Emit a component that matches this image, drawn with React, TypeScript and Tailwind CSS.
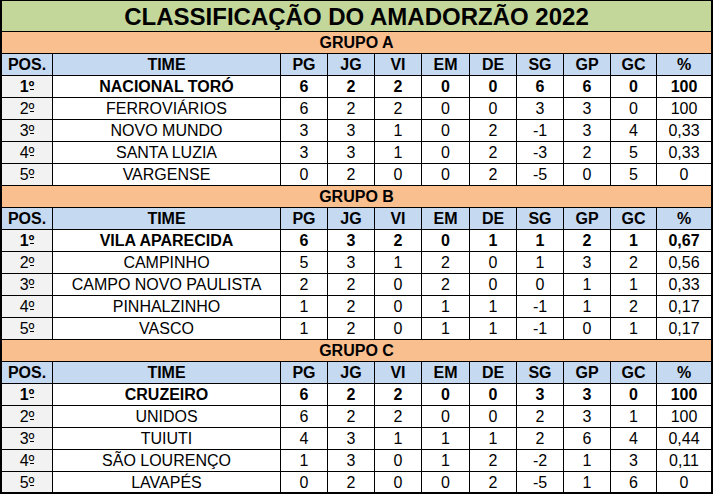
import React from "react";

type Row = { pos: string; time: string; v: string[] };
type Group = { name: string; rows: Row[] };

const groups: Group[] = [
  {
    name: "GRUPO A",
    rows: [
      { pos: "1", time: "NACIONAL TORÓ", v: ["6", "2", "2", "0", "0", "6", "6", "0", "100"] },
      { pos: "2", time: "FERROVIÁRIOS", v: ["6", "2", "2", "0", "0", "3", "3", "0", "100"] },
      { pos: "3", time: "NOVO MUNDO", v: ["3", "3", "1", "0", "2", "-1", "3", "4", "0,33"] },
      { pos: "4", time: "SANTA LUZIA", v: ["3", "3", "1", "0", "2", "-3", "2", "5", "0,33"] },
      { pos: "5", time: "VARGENSE", v: ["0", "2", "0", "0", "2", "-5", "0", "5", "0"] },
    ],
  },
  {
    name: "GRUPO B",
    rows: [
      { pos: "1", time: "VILA APARECIDA", v: ["6", "3", "2", "0", "1", "1", "2", "1", "0,67"] },
      { pos: "2", time: "CAMPINHO", v: ["5", "3", "1", "2", "0", "1", "3", "2", "0,56"] },
      { pos: "3", time: "CAMPO NOVO PAULISTA", v: ["2", "2", "0", "2", "0", "0", "1", "1", "0,33"] },
      { pos: "4", time: "PINHALZINHO", v: ["1", "2", "0", "1", "1", "-1", "1", "2", "0,17"] },
      { pos: "5", time: "VASCO", v: ["1", "2", "0", "1", "1", "-1", "0", "1", "0,17"] },
    ],
  },
  {
    name: "GRUPO C",
    rows: [
      { pos: "1", time: "CRUZEIRO", v: ["6", "2", "2", "0", "0", "3", "3", "0", "100"] },
      { pos: "2", time: "UNIDOS", v: ["6", "2", "2", "0", "0", "2", "3", "1", "100"] },
      { pos: "3", time: "TUIUTI", v: ["4", "3", "1", "1", "1", "2", "6", "4", "0,44"] },
      { pos: "4", time: "SÃO LOURENÇO", v: ["1", "3", "0", "1", "2", "-2", "1", "3", "0,11"] },
      { pos: "5", time: "LAVAPÉS", v: ["0", "2", "0", "0", "2", "-5", "1", "6", "0"] },
    ],
  },
];

const headers = ["PG", "JG", "VI", "EM", "DE", "SG", "GP", "GC", "%"];
const gridCols =
  "grid grid-cols-[50px_227px_46px_46px_46px_47px_46px_46px_46px_45px_54px] gap-px";

function Ordinal({ n }: { n: string }) {
  return (
    <span>
      {n}
      <span className="relative">
        º
        <span className="absolute left-[1px] right-0 bottom-[5px] h-px bg-black" />
      </span>
    </span>
  );
}

export default function App() {
  return (
    <div
      className="w-[713px] h-[494px] bg-black pt-px pl-[2px] pr-[2px] pb-[2px] flex flex-col gap-px text-black"
      style={{ fontFamily: '"Liberation Sans", Arial, sans-serif' }}
    >
      <div className="h-[30px] bg-[#c4d79b] flex items-center justify-center text-[24px] font-bold leading-none pt-[1px]">
        CLASSIFICAÇÃO DO AMADORZÃO 2022
      </div>
      {groups.map((g, gi) => (
        <React.Fragment key={g.name}>
          <div className="h-[21px] bg-[#fabf8f] flex items-center justify-center text-[16px] font-bold leading-none pt-[1px]">
            {g.name}
          </div>
          <div className={`${gridCols} h-[21px] text-[16px] font-bold leading-none`}>
            <div className="bg-[#c5d9f1] flex items-center justify-center pt-[1px]">POS.</div>
            <div className="bg-[#c5d9f1] flex items-center justify-center pt-[1px]">TIME</div>
            {headers.map((h) => (
              <div key={h} className="bg-[#c5d9f1] flex items-center justify-center pt-[1px]">
                {h}
              </div>
            ))}
          </div>
          {g.rows.map((r, ri) => {
            const bold = ri === 0;
            const last = gi === groups.length - 1 && ri === g.rows.length - 1;
            return (
              <div
                key={r.pos}
                className={`${gridCols} ${last ? "h-[20px]" : "h-[21px]"} text-[16px] leading-none ${
                  bold ? "font-bold" : "font-normal"
                }`}
              >
                <div className="bg-[#f2f2f2] flex items-center justify-center pt-[1px]">
                  <Ordinal n={r.pos} />
                </div>
                <div className="bg-white flex items-center justify-center pt-[1px]">{r.time}</div>
                {r.v.map((x, i) => (
                  <div key={i} className="bg-white flex items-center justify-center pt-[1px]">
                    {x}
                  </div>
                ))}
              </div>
            );
          })}
        </React.Fragment>
      ))}
    </div>
  );
}
